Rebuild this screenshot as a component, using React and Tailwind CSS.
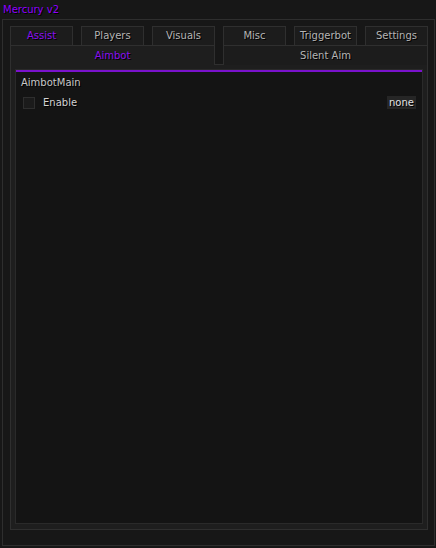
export default function App() {
  const shadow = "[text-shadow:1px_1px_0_#000]";

  const Tab = ({ label, active }) => (
    <div
      className={`flex h-[19px] w-[63px] items-center justify-center border-x border-t border-[#2f2f2f] bg-[#1c1c1c] ${shadow} ${active ? "text-[#8a10f0]" : "text-[#b4b4b4]"}`}
    >
      {label}
    </div>
  );

  const SubTab = ({ label, active }) => (
    <div
      className={`flex h-[20px] items-center justify-center border-x border-t border-[#2f2f2f] ${shadow} ${active ? "relative z-10 bg-[#1e1e1e] text-[#8a10f0]" : "bg-[#1c1c1c] text-[#b4b4b4]"}`}
    >
      {label}
    </div>
  );

  return (
    <div className="h-[548px] w-[436px] bg-[#171717] font-['DejaVu_Sans',sans-serif] text-[10px] leading-[12px]">
      {/* title */}
      <div className={`h-[19px] pl-[3px] pt-[4px] text-[#9000ff] ${shadow}`}>Mercury v2</div>

      {/* outer frame */}
      <div className="ml-[2px] h-[527px] w-[433px] border border-[#2e2e2e] bg-[#171717] pl-[7px] pt-[6px]">
        <div className="flex gap-[8px]">
          <div className="flex w-[205px] flex-col">
            <div className="flex gap-[8px]">
              <Tab label="Assist" active />
              <Tab label="Players" />
              <Tab label="Visuals" />
            </div>
            <SubTab label="Aimbot" active />
          </div>
          <div className="flex w-[205px] flex-col">
            <div className="flex gap-[8px]">
              <Tab label="Misc" />
              <Tab label="Triggerbot" />
              <Tab label="Settings" />
            </div>
            <SubTab label="Silent Aim" />
          </div>
        </div>

        {/* panel */}
        <div className="-mt-[1px] h-[466px] w-[418px] border border-[#2f2f2f] bg-[#1e1e1e] p-[4px]">
          <div className="h-[455px] w-[408px] border border-[#2a2a2a] bg-[#141414]">
            <div className="h-[2px] bg-[#7a12cc]" />
            <div className={`flex h-[22px] items-center pl-[5px] text-[#c8c8c8] ${shadow}`}>AimbotMain</div>
            <div className="mt-[2px] flex h-[13px] items-center pl-[7px] pr-[6px]">
              <div className="h-[12px] w-[12px] border border-[#2e2e2e] bg-[#1b1b1b]" />
              <span className={`ml-[8px] text-[#d2d2d2] ${shadow}`}>Enable</span>
              <span className={`ml-auto flex h-[13px] w-[29px] items-center justify-center bg-[#262626] text-[#e2e2e2] ${shadow}`}>
                none
              </span>
            </div>
          </div>
        </div>
      </div>
    </div>
  );
}
